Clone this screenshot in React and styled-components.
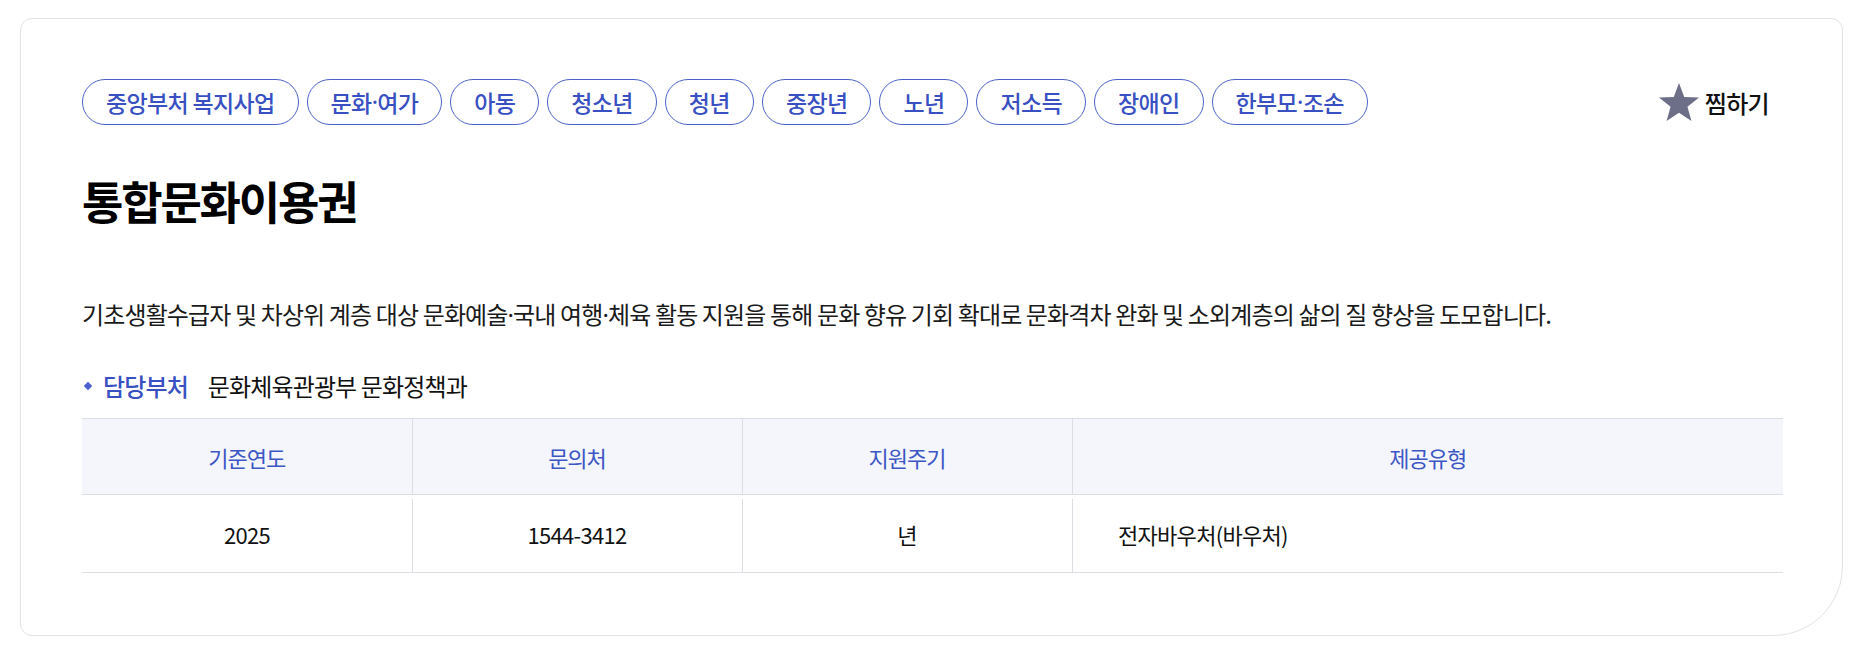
import React from "react";
import styled, { createGlobalStyle } from "styled-components";

const GlobalStyle = createGlobalStyle`
  body {
    margin: 0;
    background: #fff;
    font-family: "Noto Sans CJK KR", "Noto Sans", sans-serif;
    color: #111;
  }
`;

const Page = styled.div`
  padding: 18px 19px 18px 20px;
`;

const Card = styled.section`
  border: 1px solid #e3e3e6;
  border-radius: 12px 12px 70px 12px;
  padding: 60px 59px 62px 61px;
  background: #fff;
`;

const TopRow = styled.div`
  display: flex;
  align-items: center;
  justify-content: space-between;
`;

const Chips = styled.ul`
  display: flex;
  flex-wrap: wrap;
  gap: 8px;
  margin: 0;
  padding: 0;
  list-style: none;
`;

const Chip = styled.li`
  display: flex;
  align-items: center;
  height: 46px;
  box-sizing: border-box;
  padding: 0 23px;
  border: 1px solid #4b62c8;
  border-radius: 23px;
  color: #3850c2;
  font-size: 23px;
  font-weight: 500;
  letter-spacing: -0.65px;
`;

// the CJK font draws "·" full width; the reference has a narrow dot
const Dot = styled.span`
  font-family: "Noto Sans", sans-serif;
`;

const withDots = (text) =>
  text.split("·").flatMap((part, i) =>
    i === 0 ? [part] : [<Dot key={i}>·</Dot>, part]
  );

const FavButton = styled.button`
  display: flex;
  align-items: center;
  gap: 6px;
  padding: 0 14px 0 0;
  border: 0;
  background: none;
  font-family: inherit;
  font-size: 24px;
  font-weight: 500;
  letter-spacing: -0.65px;
  color: #111;
  cursor: pointer;
`;

const Title = styled.h1`
  margin: 48px 0 0;
  font-size: 45px;
  line-height: 56px;
  font-weight: 700;
  letter-spacing: -2.2px;
  color: #000;
`;

const Desc = styled.p`
  margin: 69px 0 0;
  font-size: 24px;
  line-height: 32px;
  letter-spacing: -0.87px;
  color: #1a1a1a;
`;

const Dept = styled.div`
  display: flex;
  align-items: center;
  margin-top: 39px;
  font-size: 24px;
  line-height: 32px;
  letter-spacing: -0.87px;
  color: #111;
`;

const Bullet = styled.span`
  width: 6px;
  height: 6px;
  margin: 0 12px 0 3px;
  background: #4a5fd0;
  transform: rotate(45deg);
`;

const DeptLabel = styled.span`
  color: #3850c2;
  font-weight: 500;
  margin-right: 20px;
`;

const Table = styled.table`
  width: 100%;
  margin-top: 16px;
  border-collapse: collapse;
  table-layout: fixed;
  border-top: 1px solid #dcdee4;
  border-bottom: 1px solid #dcdee4;
`;

const Th = styled.th`
  height: 73px;
  background: #f4f6fb;
  border-bottom: 1px solid #dcdee4;
  border-left: ${(p) => (p.$first ? "0" : "1px solid #dcdee4")};
  color: #3d56c6;
  font-size: 22px;
  font-weight: 400;
  letter-spacing: -1px;
`;

const Td = styled.td`
  height: 77px;
  padding: 0 0 0 ${(p) => (p.$left ? "46px" : "0")};
  text-align: ${(p) => (p.$left ? "left" : "center")};
  background: ${(p) =>
    p.$first
      ? "none"
      : "linear-gradient(#dcdee4, #dcdee4) left 4px / 1px calc(100% - 4px) no-repeat"};
  font-size: 22px;
  letter-spacing: -0.7px;
  color: #111;
`;

const StarIcon = () => (
  <svg width="40" height="38" viewBox="0.9 0.6 22.2 21">
    <path
      d="M12 0.6l2.9 7.7 8.2.3-6.4 5.1 2.2 7.9L12 17.1l-6.9 4.5 2.2-7.9L.9 8.6l8.2-.3z"
      fill="#6d6f88"
    />
  </svg>
);

const tags = [
  "중앙부처 복지사업",
  "문화·여가",
  "아동",
  "청소년",
  "청년",
  "중장년",
  "노년",
  "저소득",
  "장애인",
  "한부모·조손",
];

export default function App() {
  return (
    <Page>
      <GlobalStyle />
      <Card>
        <TopRow>
          <Chips>
            {tags.map((t) => (
              <Chip key={t}>{withDots(t)}</Chip>
            ))}
          </Chips>
          <FavButton>
            <StarIcon />
            찜하기
          </FavButton>
        </TopRow>
        <Title>통합문화이용권</Title>
        <Desc>
          {withDots(
            "기초생활수급자 및 차상위 계층 대상 문화예술·국내 여행·체육 활동 지원을 통해 문화 향유 기회 확대로 문화격차 완화 및 소외계층의 삶의 질 향상을 도모합니다."
          )}
        </Desc>
        <Dept>
          <Bullet />
          <DeptLabel>담당부처</DeptLabel>
          문화체육관광부 문화정책과
        </Dept>
        <Table>
          <colgroup>
            <col style={{ width: 330 }} />
            <col style={{ width: 330 }} />
            <col style={{ width: 330 }} />
            <col />
          </colgroup>
          <thead>
            <tr>
              <Th $first>기준연도</Th>
              <Th>문의처</Th>
              <Th>지원주기</Th>
              <Th>제공유형</Th>
            </tr>
          </thead>
          <tbody>
            <tr>
              <Td $first>2025</Td>
              <Td>1544-3412</Td>
              <Td>년</Td>
              <Td $left>전자바우처(바우처)</Td>
            </tr>
          </tbody>
        </Table>
      </Card>
    </Page>
  );
}
